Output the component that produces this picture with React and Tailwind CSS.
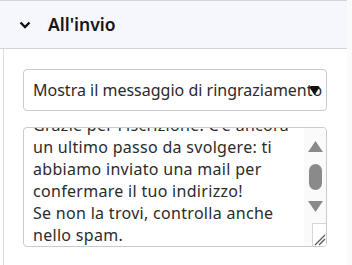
import { useState } from 'react';

const lines = [
  "Grazie per l'iscrizione! C'è ancora",
  'un ultimo passo da svolgere: ti',
  'abbiamo inviato una mail per',
  'confermare il tuo indirizzo!',
  'Se non la trovi, controlla anche',
  'nello spam.',
];

const ScrollBar = () => (
  <div className="w-[22px] flex flex-col bg-[#fafafa]">
    <div className="flex-1 flex flex-col items-center pt-[13px]">
      <svg width="15" height="11" viewBox="0 0 15 11">
        <path d="M7.5 0 L15 11 L0 11 Z" fill="#8a8a8a" />
      </svg>
      <div className="mt-[12px] w-[13px] h-[26px] rounded-full bg-[#8a8a8a]" />
      <svg className="mt-[11px]" width="15" height="11" viewBox="0 0 15 11">
        <path d="M0 0 L15 0 L7.5 11 Z" fill="#8a8a8a" />
      </svg>
    </div>
    <div className="h-[23px] ml-[8px] border-l border-t border-[#d6d6d6] bg-white flex items-end justify-end">
      <svg width="13" height="13" viewBox="0 0 13 13">
        <path d="M2 12 L12 2 M6 12 L12 6" stroke="#555" strokeWidth="1.2" />
      </svg>
    </div>
  </div>
);

const App = () => {
  const [choice] = useState('Mostra il messaggio di ringraziamento');

  return (
    <div className="w-[352px] h-[265px] flex bg-white overflow-hidden font-['Noto_Sans',sans-serif] text-[#2b2b2b]">
      <div className="w-[347px] flex flex-col">
        <div className="h-[49px] bg-[#f5f7fd] border-t border-b border-[#d3d5dc] flex items-center pl-[19px]">
          <svg width="12" height="8" viewBox="0 0 12 8">
            <path d="M1.5 1.5 L6 6 L10.5 1.5" fill="none" stroke="#111" strokeWidth="2.4" />
          </svg>
          <span className="ml-[17px] text-[17.5px] font-semibold text-[#161616]">All'invio</span>
        </div>
        <div className="flex-1 ml-[3px] border-l border-[#dcdde2] pl-[19px] pt-[20px]">
          <div className="relative w-[304px] h-[42px] border border-[#c9cad3] rounded-[4px] flex items-center pl-[9px]">
            <span className="text-[16px] whitespace-nowrap">{choice}</span>
            <svg className="absolute right-[6px] top-[16px]" width="11" height="9" viewBox="0 0 11 9">
              <path d="M0.5 1.5 Q0.5 0 2 0 L9 0 Q10.5 0 10.5 1.5 L5.5 9 Z" fill="#111" />
            </svg>
          </div>
          <div className="mt-[16px] w-[304px] h-[120px] border border-[#c9cad3] rounded-[4px] flex overflow-hidden">
            <div className="flex-1 overflow-hidden pl-[9px]">
              <div className="-mt-[14px] text-[16px] leading-[22px] tracking-[0.3px]">
                {lines.map((l) => (
                  <div key={l} className="whitespace-nowrap">{l}</div>
                ))}
              </div>
            </div>
            <ScrollBar />
          </div>
        </div>
      </div>
      <div className="flex-1 bg-[#fafafa]" />
    </div>
  );
};

export default App;
